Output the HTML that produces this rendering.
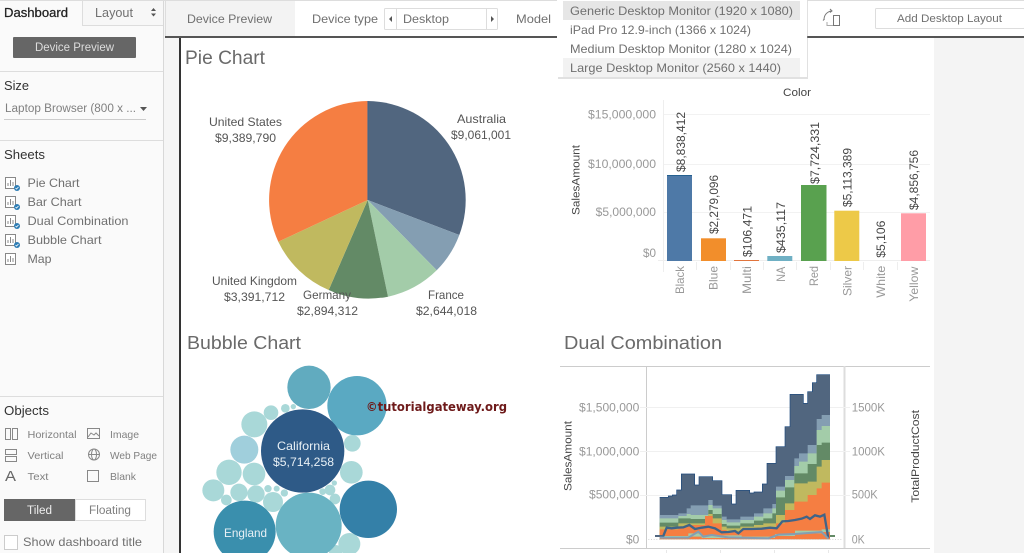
<!DOCTYPE html>
<html lang="en"><head><meta charset="utf-8"><title>Dashboard</title>
<style>
html,body{margin:0;padding:0;background:#fff;width:1024px;height:553px;overflow:hidden}
svg{display:block;filter:blur(.3px)}
text{font-family:"Liberation Sans",sans-serif;font-size:12px;fill:#555}
.s{fill:#707070}
.h{fill:#333;font-size:12.5px}
.t{font-size:19px;fill:#6a6a6a}
.d{fill:#444}
.g{fill:#999}
.a{fill:#999}
.m{fill:#555;font-size:12px}
</style></head><body>
<svg xmlns="http://www.w3.org/2000/svg" width="1024" height="553" viewBox="0 0 1024 553">
<defs>
<g id="sheet" fill="none" stroke="#888" stroke-width="1">
<rect x="5.500" y="177.500" width="10" height="11" fill="#fff"/>
<path d="M8 186v-3M10.500 186v-6M13 186v-4"/>
</g>
<g id="chk"><circle cx="17" cy="188" r="3" fill="#2d7db5"/><path d="M15.500 188l1 1 2-2" stroke="#fff" stroke-width=".8" fill="none"/></g>
</defs>
<rect width="1024" height="553" fill="#fff"/>
<!-- sidebar -->
<rect width="163" height="553" fill="#fafafa"/>
<rect x="163" width="1" height="553" fill="#d8d8d8"/>
<rect x="164" width="16" height="553" fill="#f5f5f5"/>
<rect x="82" y="0" width="81" height="25" fill="#f7f7f7"/>
<path d="M82.500 0V25.500H163" stroke="#ddd" fill="none"/>
<text x="4" y="17" class="h" textLength="64" lengthAdjust="spacingAndGlyphs" style="fill:#222;stroke:#222;stroke-width:.25">Dashboard</text>
<text x="95" y="17" class="s" textLength="38" lengthAdjust="spacingAndGlyphs" style="font-size:13px">Layout</text>
<path d="M151 11l2.500-3 2.500 3zM151 13.500l2.500 3 2.500-3z" fill="#555"/>
<rect x="13" y="37" width="123" height="21" rx="1" fill="#666"/>
<text x="35" y="51" style="fill:#ddd;font-size:11.500px" textLength="79" lengthAdjust="spacingAndGlyphs">Device Preview</text>
<rect x="0" y="71" width="163" height="1" fill="#ddd"/>
<text x="4" y="90" class="h" textLength="25" lengthAdjust="spacingAndGlyphs">Size</text>
<text x="5" y="112" style="fill:#808080;font-size:11.500px" textLength="131" lengthAdjust="spacingAndGlyphs">Laptop Browser (800 x ...</text>
<path d="M140 107h7l-3.500 4z" fill="#555"/>
<rect x="4" y="119" width="142" height="1" fill="#ccc"/>
<rect x="0" y="140" width="163" height="1" fill="#ddd"/>
<text x="4" y="159" class="h" textLength="41" lengthAdjust="spacingAndGlyphs">Sheets</text>
<use href="#sheet"/><use href="#chk"/>
<use href="#sheet" y="19"/><use href="#chk" y="19"/>
<use href="#sheet" y="38"/><use href="#chk" y="38"/>
<use href="#sheet" y="57"/><use href="#chk" y="57"/>
<use href="#sheet" y="76"/>
<text x="27.500" y="187" class="s" textLength="52" lengthAdjust="spacingAndGlyphs">Pie Chart</text>
<text x="27.500" y="206" class="s" textLength="54" lengthAdjust="spacingAndGlyphs">Bar Chart</text>
<text x="27.500" y="225" class="s" textLength="101" lengthAdjust="spacingAndGlyphs">Dual Combination</text>
<text x="27.500" y="244" class="s" textLength="74" lengthAdjust="spacingAndGlyphs">Bubble Chart</text>
<text x="27.500" y="263" class="s" textLength="24" lengthAdjust="spacingAndGlyphs">Map</text>
<rect x="0" y="396" width="163" height="1" fill="#ddd"/>
<text x="4" y="415" class="h" textLength="45" lengthAdjust="spacingAndGlyphs">Objects</text>
<g fill="none" stroke="#888">
<rect x="5.500" y="428.500" width="5" height="11"/><rect x="12.500" y="428.500" width="5" height="11"/>
<rect x="5.500" y="449.500" width="11" height="5"/><rect x="5.500" y="456.500" width="11" height="5"/>
<rect x="87.500" y="428.500" width="12" height="10"/><path d="M88 437l3-4 3 2 2-2 3 3"/>
<circle cx="94" cy="454.500" r="5.500"/><ellipse cx="94" cy="454.500" rx="2.500" ry="5.500"/><path d="M88.500 454.500h11"/>
<rect x="87.500" y="470.500" width="11" height="11"/>
</g>
<text x="5" y="481" style="font-size:15px;fill:#666" textLength="11" lengthAdjust="spacingAndGlyphs">A</text>
<text x="27.500" y="438" style="font-size:10.500px;fill:#808080" textLength="49" lengthAdjust="spacingAndGlyphs">Horizontal</text>
<text x="27.500" y="459" style="font-size:10.500px;fill:#808080" textLength="36" lengthAdjust="spacingAndGlyphs">Vertical</text>
<text x="27.500" y="480" style="font-size:10.500px;fill:#808080" textLength="21" lengthAdjust="spacingAndGlyphs">Text</text>
<text x="110" y="438" style="font-size:10.500px;fill:#808080" textLength="29" lengthAdjust="spacingAndGlyphs">Image</text>
<text x="110" y="459" style="font-size:10.500px;fill:#808080" textLength="47" lengthAdjust="spacingAndGlyphs">Web Page</text>
<text x="110" y="480" style="font-size:10.500px;fill:#808080" textLength="26" lengthAdjust="spacingAndGlyphs">Blank</text>
<rect x="4" y="499" width="71" height="22" fill="#666"/>
<rect x="75.500" y="499.500" width="70" height="21" fill="#fff" stroke="#ddd"/>
<text x="27" y="514" style="fill:#eee;font-size:11.500px" textLength="25" lengthAdjust="spacingAndGlyphs">Tiled</text>
<text x="89" y="514" style="fill:#808080;font-size:11.500px" textLength="42" lengthAdjust="spacingAndGlyphs">Floating</text>
<rect x="4.500" y="535.500" width="13" height="14" fill="#fff" stroke="#ccc"/>
<text x="23" y="546" class="s" textLength="119" lengthAdjust="spacingAndGlyphs">Show dashboard title</text>
<!-- toolbar -->
<rect x="165" y="0" width="859" height="37" fill="#fff"/>
<rect x="165" y="0" width="1" height="37" fill="#ddd"/>
<rect x="166" y="0" width="129" height="36" fill="#f3f3f3"/>
<rect x="0" y="0" width="1024" height="1" fill="#ddd"/>
<text x="187" y="23" class="s" textLength="85" lengthAdjust="spacingAndGlyphs">Device Preview</text>
<text x="312" y="23" class="s" textLength="66" lengthAdjust="spacingAndGlyphs">Device type</text>
<rect x="384.500" y="8.500" width="113" height="21" rx="1" fill="#fff" stroke="#ddd"/>
<path d="M396.500 8.500v21M486.500 8.500v21" stroke="#ddd"/>
<path d="M392 16v6l-3-3zM491 16v6l3-3z" fill="#555"/>
<text x="403" y="23" class="s" textLength="46" lengthAdjust="spacingAndGlyphs">Desktop</text>
<text x="516" y="23" class="s" textLength="35" lengthAdjust="spacingAndGlyphs">Model</text>
<g fill="none" stroke="#777"><rect x="833.500" y="15.500" width="6" height="10"/><path d="M824 20c0-5 3-8 7-9M824.500 19l-1.500 1.500M830 9l2 2-2 1.500"/><path d="M827 22v3.500h6" stroke="#aaa"/></g>
<rect x="875.500" y="8.500" width="149" height="20" rx="1" fill="#fff" stroke="#ddd"/>
<text x="897" y="22" class="s" style="font-size:11px" textLength="105" lengthAdjust="spacingAndGlyphs">Add Desktop Layout</text>
<rect x="165" y="36" width="859" height="2" fill="#555"/>
<!-- canvas -->
<rect x="934" y="38" width="90" height="515" fill="#f4f4f4"/>
<rect x="179" y="38" width="2" height="515" fill="#333"/>
<rect x="181" y="38" width="753" height="515" fill="#fff"/>
<text x="185" y="64" class="t" textLength="80" lengthAdjust="spacingAndGlyphs">Pie Chart</text>
<text x="187" y="349" class="t" style="font-size:18px" textLength="114" lengthAdjust="spacingAndGlyphs">Bubble Chart</text>
<text x="564" y="349" class="t" style="font-size:18px" textLength="158" lengthAdjust="spacingAndGlyphs">Dual Combination</text>
<!-- pie -->
<g>
<path d="M367.700 200V101A99 99 0 0 1 459.300 235Z" fill="#51667f"/>
<path d="M367.700 200L459.300 235A99 99 0 0 1 436.700 270.300Z" fill="#849eb2"/>
<path d="M367.700 200L436.700 270.300A99 99 0 0 1 388 296.700Z" fill="#a3cca9"/>
<path d="M367.700 200L388 296.700A99 99 0 0 1 328.700 290Z" fill="#638a66"/>
<path d="M367.700 200L328.700 290A99 99 0 0 1 278.300 241.700Z" fill="#c0b95f"/>
<path d="M367.700 200L278.300 241.700A99 99 0 0 1 367.700 101Z" fill="#f57e42"/>
<path d="M367.900 101V200" stroke="#2f6699" stroke-width=".8"/>
</g>
<g>
<text x="209" y="126" class="m" textLength="73" lengthAdjust="spacingAndGlyphs">United States</text>
<text x="215" y="142" class="m" textLength="61" lengthAdjust="spacingAndGlyphs">$9,389,790</text>
<text x="457" y="123" class="m" textLength="49" lengthAdjust="spacingAndGlyphs">Australia</text>
<text x="451" y="139" class="m" textLength="60" lengthAdjust="spacingAndGlyphs">$9,061,001</text>
<text x="212" y="285" class="m" textLength="85" lengthAdjust="spacingAndGlyphs">United Kingdom</text>
<text x="224" y="301" class="m" textLength="61" lengthAdjust="spacingAndGlyphs">$3,391,712</text>
<text x="303" y="299" class="m" textLength="48" lengthAdjust="spacingAndGlyphs">Germany</text>
<text x="297" y="315" class="m" textLength="61" lengthAdjust="spacingAndGlyphs">$2,894,312</text>
<text x="428" y="299" class="m" textLength="36" lengthAdjust="spacingAndGlyphs">France</text>
<text x="416" y="315" class="m" textLength="61" lengthAdjust="spacingAndGlyphs">$2,644,018</text>
</g>
<!-- bar chart -->
<text x="783" y="96" style="font-size:11px;fill:#444" textLength="28" lengthAdjust="spacingAndGlyphs">Color</text>
<path d="M663 114.500H930M663 164.500H930M663 212.500H930" stroke="#f2f2f2"/>
<path d="M658 260.500H930" stroke="#eee"/>
<path d="M663.500 100V272M696.500 262v8M730.500 262v8M763.500 262v8M796.500 262v8M830.500 262v8M863.500 262v8M897.500 262v8" stroke="#eee"/>
<rect x="667" y="175" width="25" height="86" fill="#4e79a7"/><rect x="667" y="175" width="25" height="1" fill="#25608f"/>
<rect x="701" y="238.300" width="25" height="22.700" fill="#f28e2b"/>
<rect x="734" y="260" width="25" height="1" fill="#e1743c"/>
<rect x="767.300" y="256" width="25" height="5" fill="#6fb0c4"/>
<rect x="801" y="185" width="25.500" height="76" fill="#59a14f"/>
<rect x="834.300" y="210.700" width="25" height="50.300" fill="#edc948"/>
<rect x="901" y="213.300" width="25" height="47.700" fill="#ff9da7"/>
<text transform="translate(685 172) rotate(-90)" class="d" textLength="60" lengthAdjust="spacingAndGlyphs">$8,838,412</text>
<text transform="translate(718 234) rotate(-90)" class="d" textLength="59" lengthAdjust="spacingAndGlyphs">$2,279,096</text>
<text transform="translate(751.700 257) rotate(-90)" class="d" textLength="51" lengthAdjust="spacingAndGlyphs">$106,471</text>
<text transform="translate(785 253) rotate(-90)" class="d" textLength="51" lengthAdjust="spacingAndGlyphs">$435,117</text>
<text transform="translate(819 184) rotate(-90)" class="d" textLength="62" lengthAdjust="spacingAndGlyphs">$7,724,331</text>
<text transform="translate(851.700 207) rotate(-90)" class="d" textLength="59" lengthAdjust="spacingAndGlyphs">$5,113,389</text>
<text transform="translate(885 257.700) rotate(-90)" class="d" textLength="37" lengthAdjust="spacingAndGlyphs">$5,106</text>
<text transform="translate(918 210) rotate(-90)" class="d" textLength="60" lengthAdjust="spacingAndGlyphs">$4,856,756</text>
<text transform="translate(684 294) rotate(-90)" class="a" textLength="28" lengthAdjust="spacingAndGlyphs">Black</text>
<text transform="translate(717.700 290) rotate(-90)" class="a" textLength="24" lengthAdjust="spacingAndGlyphs">Blue</text>
<text transform="translate(751 294) rotate(-90)" class="a" textLength="28" lengthAdjust="spacingAndGlyphs">Multi</text>
<text transform="translate(785 281.700) rotate(-90)" class="a" textLength="15" lengthAdjust="spacingAndGlyphs">NA</text>
<text transform="translate(818 286) rotate(-90)" class="a" textLength="20" lengthAdjust="spacingAndGlyphs">Red</text>
<text transform="translate(851.700 296) rotate(-90)" class="a" textLength="30" lengthAdjust="spacingAndGlyphs">Silver</text>
<text transform="translate(885 297.700) rotate(-90)" class="a" textLength="32" lengthAdjust="spacingAndGlyphs">White</text>
<text transform="translate(918 301.700) rotate(-90)" class="a" textLength="35" lengthAdjust="spacingAndGlyphs">Yellow</text>
<text x="588" y="118.500" class="a" textLength="68" lengthAdjust="spacingAndGlyphs">$15,000,000</text>
<text x="588" y="168" class="a" textLength="68" lengthAdjust="spacingAndGlyphs">$10,000,000</text>
<text x="595.700" y="216" class="a" textLength="60.300" lengthAdjust="spacingAndGlyphs">$5,000,000</text>
<text x="643" y="257" class="a" textLength="13" lengthAdjust="spacingAndGlyphs">$0</text>
<text transform="translate(579.300 215) rotate(-90)" class="d" style="font-size:11px" textLength="70" lengthAdjust="spacingAndGlyphs">SalesAmount</text>
<!-- bubbles -->
<g transform="translate(180 355) scale(.33333)">
<g fill="#a9d8d8">
<circle cx="273" cy="173" r="22"/><circle cx="223" cy="208" r="39"/><circle cx="316" cy="160" r="13"/><circle cx="340" cy="155" r="8"/>
<circle cx="147" cy="352" r="38"/><circle cx="222" cy="357" r="34"/><circle cx="100" cy="406" r="33"/><circle cx="177" cy="412" r="26"/>
<circle cx="228" cy="417" r="26"/><circle cx="139" cy="435" r="16"/><circle cx="264" cy="401" r="11"/><circle cx="290" cy="401" r="9"/>
<circle cx="313" cy="414" r="11"/><circle cx="279" cy="441" r="30"/><circle cx="517" cy="265" r="25"/><circle cx="514" cy="352" r="34"/>
<circle cx="508" cy="567" r="33"/><circle cx="450" cy="405" r="16"/><circle cx="465" cy="432" r="16"/><circle cx="463" cy="384" r="8"/>
<circle cx="428" cy="410" r="10"/><circle cx="467" cy="590" r="20"/>
</g>
<circle cx="193" cy="284" r="42" fill="#a0cfdc"/>
<circle cx="387" cy="97" r="65" fill="#61abbf"/>
<circle cx="531" cy="152" r="89" fill="#5aa9c2"/>
<circle cx="368" cy="288" r="125" fill="#2e5a87"/>
<circle cx="194" cy="530" r="93" fill="#3a8fad"/>
<circle cx="386" cy="512" r="99" fill="#69b3c3"/>
<circle cx="565" cy="463" r="86" fill="#3480a8"/>
</g>
<text x="277" y="450" style="fill:#e8f0f5" textLength="53" lengthAdjust="spacingAndGlyphs">California</text>
<text x="273" y="466" style="fill:#e8f0f5" textLength="61" lengthAdjust="spacingAndGlyphs">$5,714,258</text>
<text x="224" y="537" style="fill:#e8f0f5" textLength="43" lengthAdjust="spacingAndGlyphs">England</text>
<text x="366" y="411" style="font-family:'DejaVu Sans',sans-serif;font-weight:700;font-size:12px;fill:#6e1a1a" textLength="141" lengthAdjust="spacingAndGlyphs">©tutorialgateway.org</text>
<!-- dual -->
<path d="M560 366.500H930M560 548.500H930" stroke="#ccc"/>
<path d="M646.500 366V548" stroke="#ccc"/><rect x="843.500" y="366" width="2" height="182" fill="#ddd"/>
<path d="M640 407.500H850M640 451.500H850M640 495.500H850" stroke="#f0f0f0"/>
<g transform="translate(555 360) scale(.33333)">
<path d="M314 538V412H340V408H352V405H365V390H379V342H419V375H432V350H473V362H501V404H530V432H543V391H584V399H597V396H622V372H636V310H663V260H690V200H705V103H745V130H758V95H772V68H785V44H825V538Z" fill="#51667f"/>
<path d="M314 412H340V408H352V405H365V390H379V342H419V375H432V350H473V362H501V404H530V432H543V391H584V399H597V396H622V372H636V310H663V260H690V200H705V103H745V130H758V95H772V68H785V44H825" fill="none" stroke="#1e4a7d" stroke-width="2"/>
<path d="M314 538V465H370V460H395V445H407V436H460V420H473V437H500V470H515V478H556V470H597V460H625V445H652V432H663V380H690V348H718V295H732V280H758V255H785V177H800V165H825V538Z" fill="#849eb2"/>
<path d="M314 538V475H370V468H395V462H407V465H460V435H473V445H500V480H515V487H556V480H597V470H625V460H652V445H663V392H690V360H718V318H732V305H758V280H785V210H800V198H825V538Z" fill="#a3cca9"/>
<path d="M314 538V488H370V475H407V477H460V450H473V462H500V492H515V497H556V490H597V482H625V475H652V460H663V412H690V382H718V340H758V312H785V255H800V248H825V538Z" fill="#638a66"/>
<path d="M314 538V500H370V490H460V462H473V475H500V500H515V505H556V500H597V495H625V490H663V465H690V430H718V370H758V365H785V320H800V300H825V538Z" fill="#c0b95f"/>
<path d="M314 538V508H370V503H395V495H450V468H473V490H500V510H515V515H556V510H597V508H625V505H663V490H690V450H718V425H758V405H785V385H800V368H825V538Z" fill="#f57e42"/>
<path d="M314 538V528H400V520H440V526H560V530H660V522H720V512H800V508H825V538Z" fill="#a3cca9"/>
<path d="M314 538V532H400V530H440V534H660V528H720V520H800V516H825V538Z" fill="#f57e42"/>
<path d="M280 538H860" stroke="#bbb" stroke-width="2" stroke-dasharray="3 5"/>
<path d="M300 528H322" stroke="#51667f" stroke-width="6" fill="none"/>
<path d="M825 528H840" stroke="#638a66" stroke-width="6" fill="none"/>
<path d="M322 535L335 503 350 505 365 503 385 502 403 495 420 507 440 503 460 500 480 505 500 517 520 516 540 513 550 520 565 507 590 507 620 506 645 503 665 505 682 484 700 483 720 480 740 476 755 470 765 477 780 466 795 470 808 464 820 535" fill="none" stroke="#3f6488" stroke-width="7"/>
<path d="M314 533H400L430 515 445 530 470 525 520 532 640 535 670 524 720 522 800 516 820 536" fill="none" stroke="#849eb2" stroke-width="6"/>
<path d="M335 570v9M497 570v9M658 570v9M820 570v9" stroke="#ddd" stroke-width="2"/>
</g>
<text x="579" y="411.700" class="a" textLength="60.300" lengthAdjust="spacingAndGlyphs">$1,500,000</text>
<text x="579" y="455.700" class="a" textLength="60.300" lengthAdjust="spacingAndGlyphs">$1,000,000</text>
<text x="589" y="498.700" class="a" textLength="50.300" lengthAdjust="spacingAndGlyphs">$500,000</text>
<text x="626" y="543.300" class="a" textLength="13.300" lengthAdjust="spacingAndGlyphs">$0</text>
<text x="851.700" y="411.700" class="a" textLength="33.300" lengthAdjust="spacingAndGlyphs">1500K</text>
<text x="851.700" y="455.700" class="a" textLength="33.300" lengthAdjust="spacingAndGlyphs">1000K</text>
<text x="851.700" y="498.700" class="a" textLength="26" lengthAdjust="spacingAndGlyphs">500K</text>
<text x="851.700" y="543.300" class="a" textLength="13" lengthAdjust="spacingAndGlyphs">0K</text>
<text transform="translate(571.700 491) rotate(-90)" class="d" style="font-size:11px" textLength="70" lengthAdjust="spacingAndGlyphs">SalesAmount</text>
<text transform="translate(919 502.700) rotate(-90)" class="d" style="font-size:11px" textLength="92.700" lengthAdjust="spacingAndGlyphs">TotalProductCost</text>
<!-- dropdown -->
<rect x="558" y="1" width="250" height="78" fill="#aaa" opacity=".35"/>
<rect x="557" y="0" width="250" height="77" fill="#fff"/>
<rect x="563" y="1" width="237" height="19" fill="#e6e6e6"/>
<rect x="563" y="58" width="237" height="19" fill="#f2f2f2"/>
<text x="570" y="15" class="s" textLength="223" lengthAdjust="spacingAndGlyphs">Generic Desktop Monitor (1920 x 1080)</text>
<text x="570" y="34" class="s" textLength="181" lengthAdjust="spacingAndGlyphs">iPad Pro 12.9-inch (1366 x 1024)</text>
<text x="570" y="53" class="s" textLength="222" lengthAdjust="spacingAndGlyphs">Medium Desktop Monitor (1280 x 1024)</text>
<text x="570" y="72" class="s" textLength="211" lengthAdjust="spacingAndGlyphs">Large Desktop Monitor (2560 x 1440)</text>
</svg>
</body></html>
